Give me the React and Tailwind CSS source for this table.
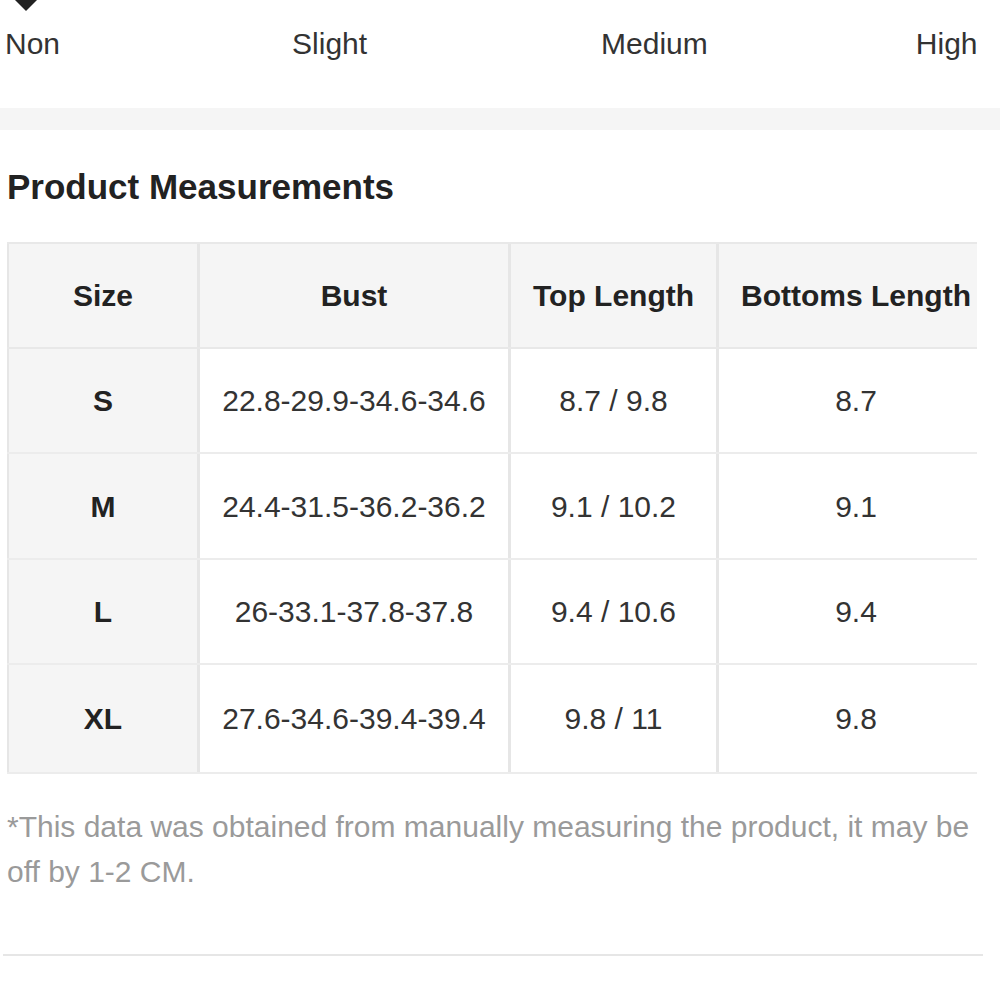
import React from "react";

const rows = [
  ["S", "22.8-29.9-34.6-34.6", "8.7 / 9.8", "8.7", "h-[105px]"],
  ["M", "24.4-31.5-36.2-36.2", "9.1 / 10.2", "9.1", "h-[106px]"],
  ["L", "26-33.1-37.8-37.8", "9.4 / 10.6", "9.4", "h-[105px]"],
  ["XL", "27.6-34.6-39.4-39.4", "9.8 / 11", "9.8", "h-[109px]"],
];

export default function App() {
  return (
    <div
      className="w-[1000px] h-[1000px] bg-white overflow-hidden"
      style={{ fontFamily: '"Liberation Sans", Arial, Helvetica, sans-serif' }}
    >
      {/* marker */}
      <div className="h-[11px] pl-[15px]">
        <svg width="22" height="11" viewBox="0 0 22 11" className="block">
          <polygon points="0,0 22,0 11,11" fill="#222" />
        </svg>
      </div>

      {/* legend labels */}
      <div className="mt-[15px] flex pl-[5px] text-[30px] leading-[36px] text-[#333]">
        <span>Non</span>
        <span className="ml-[232px]">Slight</span>
        <span className="ml-[234px]">Medium</span>
        <span className="ml-[208px]">High</span>
      </div>

      {/* grey band */}
      <div className="mt-[46px] h-[22px] bg-[#f5f5f5]" />

      {/* title */}
      <h2 className="mt-[36px] pl-[7px] text-[35px] leading-[42px] font-bold text-[#222]">
        Product Measurements
      </h2>

      {/* table */}
      <div className="mt-[34px] ml-[7px] w-[970px] overflow-hidden">
        <div className="w-[1010px] border-t-2 border-[#e8e8e8]">
          <div className="flex h-[105px] border-b-2 border-[#e8e8e8] bg-[#f5f5f5] text-[30px] font-bold text-[#222]">
            <div className="w-[193px] shrink-0 border-l-2 border-r-[3px] border-[#e6e6e6] flex items-center justify-center">
              Size
            </div>
            <div className="w-[311px] shrink-0 border-r-[3px] border-[#e6e6e6] flex items-center justify-center">
              Bust
            </div>
            <div className="w-[208px] shrink-0 border-r-[3px] border-[#e6e6e6] flex items-center justify-center">
              Top Length
            </div>
            <div className="w-[274px] shrink-0 flex items-center justify-center">
              Bottoms Length
            </div>
          </div>
          {rows.map(([s, b, t, bl, h]) => (
            <div
              key={s}
              className={`flex ${h} border-b-2 border-[#ececec] text-[30px] text-[#333]`}
            >
              <div className="w-[193px] shrink-0 bg-[#f5f5f5] border-l-2 border-r-[3px] border-[#e6e6e6] flex items-center justify-center font-bold text-[#222]">
                {s}
              </div>
              <div className="w-[311px] shrink-0 border-r-[3px] border-[#e6e6e6] flex items-center justify-center">
                {b}
              </div>
              <div className="w-[208px] shrink-0 border-r-[3px] border-[#e6e6e6] flex items-center justify-center">
                {t}
              </div>
              <div className="w-[274px] shrink-0 flex items-center justify-center">
                {bl}
              </div>
            </div>
          ))}
        </div>
      </div>

      {/* footnote */}
      <p className="mt-[30px] pl-[7px] pr-[23px] text-[30px] leading-[45px] text-[#9a9a9a]">
        *This data was obtained from manually measuring the product, it may be off by 1-2 CM.
      </p>

      {/* divider */}
      <div className="mt-[60px] ml-[3px] w-[980px] h-[2px] bg-[#e6e6e6]" />
    </div>
  );
}
